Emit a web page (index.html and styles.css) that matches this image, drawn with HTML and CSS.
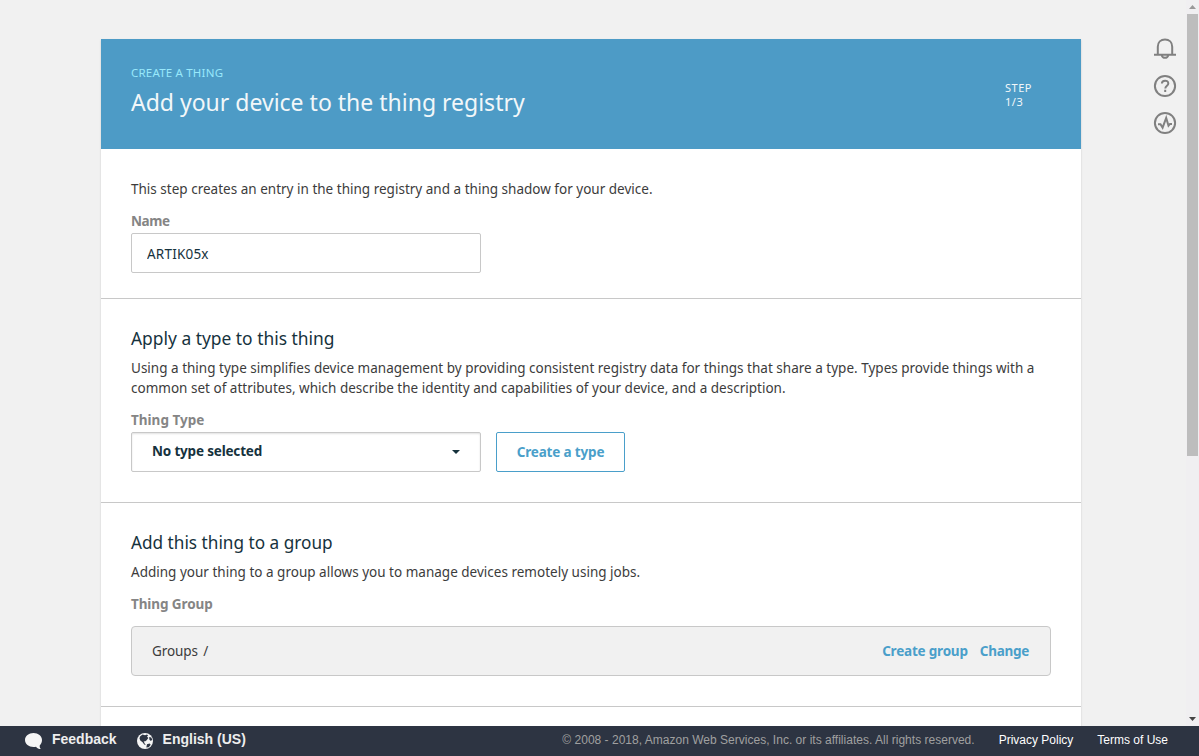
FILE: index.html
```html
<!DOCTYPE html>
<html lang="en">
<head>
<meta charset="utf-8">
<title>Create a thing</title>
<link rel="stylesheet" href="styles.css">
</head>
<body>
<div class="viewport">
  <main class="card">
    <header class="banner">
      <div>
        <div class="banner-kicker">CREATE A THING</div>
        <h1 class="banner-title">Add your device to the thing registry</h1>
      </div>
      <div class="banner-step"><div>STEP</div><div>1/3</div></div>
    </header>
    <section class="section section-name">
      <p class="text">This step creates an entry in the thing registry and a thing shadow for your device.</p>
      <label class="label label-name" for="name">Name</label>
      <input class="input" id="name" type="text" value="ARTIK05x">
    </section>
    <section class="section section-type">
      <h2 class="heading">Apply a type to this thing</h2>
      <p class="text">Using a thing type simplifies device management by providing consistent registry data for things that share a type. Types provide things with a<br>common set of attributes, which describe the identity and capabilities of your device, and a description.</p>
      <div class="label label-type">Thing Type</div>
      <div class="type-row">
        <div class="select"><span>No type selected</span><svg class="caret" width="8" height="4" viewBox="0 0 8 4"><path d="M0 0h8L4 4z"/></svg></div>
        <button class="button">Create a type</button>
      </div>
    </section>
    <section class="section section-group">
      <h2 class="heading heading-group">Add this thing to a group</h2>
      <p class="text">Adding your thing to a group allows you to manage devices remotely using jobs.</p>
      <div class="label label-group">Thing Group</div>
      <div class="group-box">
        <span class="group-path">Groups <span class="slash">/</span></span>
        <span class="link link-create">Create group</span>
        <span class="link link-change">Change</span>
      </div>
    </section>
    <section class="section section-rest"></section>
  </main>
  <aside class="tools">
    <svg width="24" height="24" viewBox="0 0 24 24"><path d="M4.800 17.300V9.700c0-4.300 3-7.200 7.200-7.200s7.200 2.900 7.200 7.200v7.600M1 17.700h22M8.800 18.500a3.300 3.100 0 0 0 6.400 0"/></svg>
    <svg width="24" height="24" viewBox="0 0 24 24"><circle cx="12" cy="12" r="10.1"/><path d="M8.900 9.600c0-3.900 6.400-3.900 6.400-.2 0 2.300-3 2.300-3 5.200M12.200 15.800v2.200"/></svg>
    <svg width="24" height="24" viewBox="0 0 24 24"><circle cx="12" cy="12" r="10.1"/><path d="M5 13.200h2.500L9.600 16.700 13.200 7l2.300 7.700 1.500-1.800H19"/></svg>
  </aside>
  <div class="scrollbar">
    <svg class="arrow-up" width="7" height="4" viewBox="0 0 7 4"><path d="M0 4h7L3.500 0z"/></svg>
    <div class="thumb"></div>
    <svg class="arrow-down" width="7" height="4" viewBox="0 0 7 4"><path d="M0 0h7L3.500 4z"/></svg>
  </div>
</div>
<footer class="footer">
  <svg class="bubble" width="18" height="17" viewBox="0 0 18 17"><path d="M8.500 0C3.800 0 0 3.100 0 7s3.800 7 8.500 7c.9 0 1.700-.1 2.500-.3 1.100 1.400 2.600 2.300 5 2.400-1.100-.9-1.400-2.100-1.300-3.700C16.200 11 17 9.100 17 7c0-3.900-3.800-7-8.500-7z"/></svg>
  <span class="foot-bold">Feedback</span>
  <svg class="globe" width="16" height="16" viewBox="0 0 16 16"><circle cx="8" cy="8" r="8"/><path class="land" d="M3 3.500 5.500 1.600 8 2.200l2-.6 1.200 1.200-1.300.8 1.500 1.400-2 2.600-1.500 1-1.200-.6.800 2.300 1.300 1.800-1.600-.6L5.600 9.200 3.300 7.600 2.500 5.400z"/><path class="land" d="M12.200 4l2.100.5.900 2.200-1.300 1.200-1.500-1.200zM10 11.200l2.600-.6 1.100 1.200-1.900 2.400-2.500.4.300-1.600z"/></svg>
  <span class="foot-bold foot-language">English (US)</span>
  <span class="copyright">© 2008 - 2018, Amazon Web Services, Inc. or its affiliates. All rights reserved.</span>
  <span class="foot-link">Privacy Policy</span>
  <span class="foot-link">Terms of Use</span>
</footer>
</body>
</html>
```

FILE: styles.css
```css
* { box-sizing: border-box; }
body {
  margin: 0;
  height: 756px;
  overflow: hidden;
  display: flex;
  flex-direction: column;
  background: #f1f1f1;
  color: #3c3c3c;
  font-family: "Noto Sans", "Open Sans", sans-serif;
  font-size: 13.5px;
}
h1, h2, p { margin: 0; font-weight: 400; }
.viewport { height: 726px; display: flex; overflow: hidden; }
.card {
  width: 980px;
  height: 740px;
  flex: none;
  margin: 39px 0 0 101px;
  background: #fff;
  box-shadow: 0 1px 2px rgba(0, 0, 0, .15);
  white-space: nowrap;
}
.banner {
  height: 110px;
  padding: 25px 49px 0 30px;
  display: flex;
  justify-content: space-between;
  background: #4d9bc6;
  color: #f2f7f9;
}
.banner-kicker { font-size: 11.5px; line-height: 18px; color: #98e8fb; letter-spacing: .2px; }
.banner-title { font-size: 23px; line-height: 34px; margin-top: 3px; }
.banner-step { width: 27px; font-size: 11px; line-height: 14px; padding-top: 17px; letter-spacing: .5px; }
.section { padding: 0 30px; border-bottom: 1px solid #c8c8c8; }
.section-name { height: 150px; padding-top: 30px; }
.section-type { height: 204px; padding-top: 25px; }
.section-group { height: 204px; padding-top: 26px; }
.section-rest { border: 0; }
.text { line-height: 20px; letter-spacing: .01px; }
.label { display: block; line-height: 20px; font-weight: 700; letter-spacing: -.1px; color: #858585; }
.label-name { margin: 12px 0 2px; letter-spacing: -.4px; }
.label-type { margin: 12px 0 2px; letter-spacing: 0; }
.label-group { margin: 12px 0; }
.input {
  display: block;
  width: 350px;
  height: 40px;
  padding: 1px 15px 0;
  border: 1px solid #c8c8c8;
  border-radius: 2px;
  background: #fff;
  color: #16323d;
  font: inherit;
  letter-spacing: .2px;
}
.heading { font-size: 17.4px; line-height: 28px; color: #16323d; margin-bottom: 6px; }
.heading-group { font-size: 17.2px; margin-bottom: 5px; }
.type-row { display: flex; gap: 15px; }
.select {
  width: 350px;
  height: 40px;
  padding: 0 20px 3px;
  display: flex;
  align-items: center;
  justify-content: space-between;
  border: 1px solid #c8c8c8;
  border-radius: 2px;
  box-shadow: inset 0 1px 2px rgba(0, 0, 0, .12);
  color: #16323d;
  font-weight: 700;
  letter-spacing: -.18px;
}
.caret { fill: #16323d; margin-top: 3px; }
.button {
  width: 129px;
  height: 40px;
  padding: 0 0 1px;
  border: 1px solid #4a9fca;
  border-radius: 2px;
  background: #fff;
  color: #4a9fca;
  font: inherit;
  font-weight: 700;
  letter-spacing: -.17px;
}
.group-box {
  width: 920px;
  height: 50px;
  padding: 0 21px 1px 20px;
  display: flex;
  align-items: center;
  border: 1px solid #c8c8c8;
  border-radius: 4px;
  background: #f1f1f1;
}
.group-path { flex: 1; letter-spacing: -.1px; }
.slash { margin-left: 2px; }
.link { color: #4a9fca; font-weight: 700; letter-spacing: -.2px; }
.link-create { margin-right: 12px; }
.link-change { letter-spacing: -.28px; }
.tools {
  width: 105px;
  padding: 37px 0 0 72px;
  display: flex;
  flex-direction: column;
  gap: 13px;
}
.tools svg { flex: none; fill: none; stroke: #808080; stroke-width: 2; }
.scrollbar {
  width: 13px;
  padding: 5px 1px;
  display: flex;
  flex-direction: column;
  align-items: center;
  background: #f0eff1;
}
.arrow-up { fill: #999; }
.thumb { width: 11px; height: 442px; margin-top: 5px; background: #bdbdbd; }
.arrow-down { fill: #444; margin-top: auto; }
.footer {
  height: 30px;
  padding: 0 31px 2px 25px;
  display: flex;
  align-items: center;
  background: #2d3442;
  font-family: "Liberation Sans", Arial, sans-serif;
  font-size: 12px;
  white-space: nowrap;
}
.bubble, .globe { fill: #f5f5f5; flex: none; margin-top: 2px; }
.globe { margin-left: 20px; }
.land { fill: #2d3442; }
.foot-bold { font-size: 14px; font-weight: 700; color: #eee; margin: -3px 0 0 9px; }
.foot-language { margin-left: 10px; }
.copyright { margin-left: auto; color: #a0a0a0; letter-spacing: .013px; }
.foot-link { color: #fff; margin-left: 24px; }
```
